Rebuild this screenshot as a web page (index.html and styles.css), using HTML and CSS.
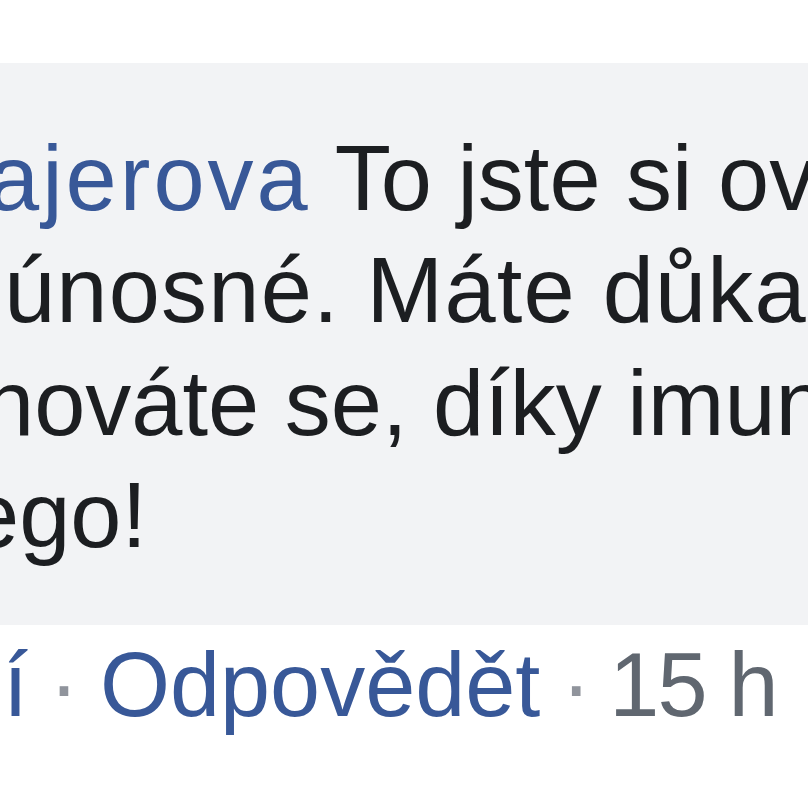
FILE: index.html
```html
<!DOCTYPE html>
<html lang="cs">
<head>
    <meta charset="UTF-8">
    <meta name="viewport" content="width=device-width, initial-scale=1.0">
    <title>Komentář</title>
    <link rel="stylesheet" href="styles.css">
</head>
<body>
    <div class="comment">
        <div class="bubble">
            <p class="line l1"><a class="name" href="#">ajerova</a> To jste si ověřili?</p>
            <p class="line l2">únosné. Máte důkazy?</p>
            <p class="line l3">hováte se, díky imunitě</p>
            <p class="line l4">ego!</p>
        </div>
        <div class="actions">
            <a class="link" href="#">í</a>
            <span class="dot">·</span>
            <a class="link" href="#">Odpovědět</a>
            <span class="dot">·</span>
            <span class="time">15 h</span>
        </div>
    </div>
</body>
</html>
```

FILE: styles.css
```css
body {
    margin: 0;
    background-color: #ffffff;
    font-family: 'Liberation Sans', Arial, sans-serif;
    overflow: hidden;
}
.comment {
    width: 808px;
    height: 808px;
    overflow: hidden;
    padding-top: 63px;
    box-sizing: border-box;
}
.bubble {
    background-color: #f2f3f5;
    padding: 59px 0 54px;
    font-size: 92px;
    line-height: 112.3px;
    color: #1c1e21;
}
.line {
    margin: 0;
    white-space: nowrap;
}
.l1 { margin-left: -12px; }
.l2 { margin-left: 4px; letter-spacing: 1.2px; }
.l3 { margin-left: -17px; }
.l4 { margin-left: -32px; }
.name {
    color: #385898;
    text-decoration: none;
    letter-spacing: 3px;
}
.actions {
    margin-top: 4px;
    margin-left: 3px;
    font-size: 90px;
    line-height: 112px;
    white-space: nowrap;
    display: flex;
    gap: 21px;
}
.link {
    color: #385898;
    text-decoration: none;
}
.dot {
    color: #90949c;
}
.time {
    color: #606770;
    margin-left: -3px;
    letter-spacing: -2px;
}
```
